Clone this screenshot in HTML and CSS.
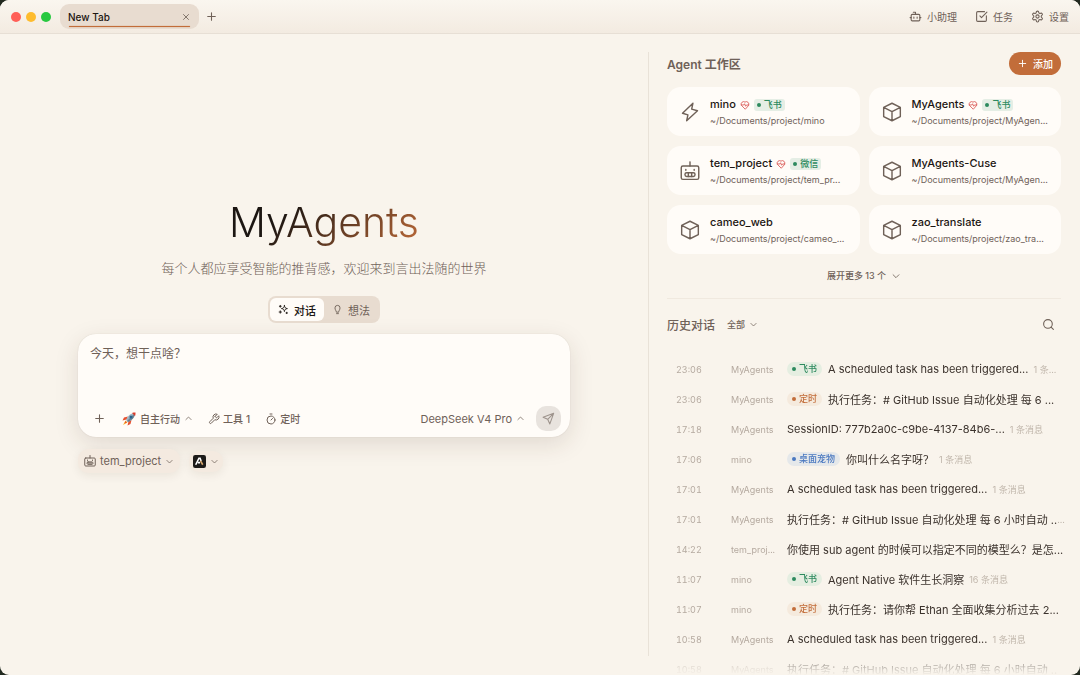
FILE: index.html
```html
<!DOCTYPE html>
<html lang="zh-CN">
<head>
<meta charset="utf-8">
<title>MyAgents</title>
<link rel="stylesheet" href="styles.css">
</head>
<body>
<svg class="sprite" aria-hidden="true">
  <symbol id="i-plus" viewBox="0 0 24 24"><path d="M5 12h14M12 5v14"/></symbol>
  <symbol id="i-x" viewBox="0 0 24 24"><path d="M18 6 6 18M6 6l12 12"/></symbol>
  <symbol id="i-down" viewBox="0 0 24 24"><path d="m5 9 7 7 7-7"/></symbol>
  <symbol id="i-up" viewBox="0 0 24 24"><path d="m19 15-7-7-7 7"/></symbol>
  <symbol id="i-bot" viewBox="0 0 24 24"><path d="M12 8V4H8"/><rect width="16" height="12" x="4" y="8" rx="2"/><path d="M2 14h2M20 14h2M15 13v2M9 13v2"/></symbol>
  <symbol id="i-check" viewBox="0 0 24 24"><path d="M21 10.5V19a2 2 0 0 1-2 2H5a2 2 0 0 1-2-2V5a2 2 0 0 1 2-2h12.5"/><path d="m9 11 3 3L22 4"/></symbol>
  <symbol id="i-gear" viewBox="0 0 24 24"><path d="M12.22 2h-.44a2 2 0 0 0-2 2v.18a2 2 0 0 1-1 1.73l-.43.25a2 2 0 0 1-2 0l-.15-.08a2 2 0 0 0-2.73.73l-.22.38a2 2 0 0 0 .73 2.73l.15.1a2 2 0 0 1 1 1.72v.51a2 2 0 0 1-1 1.74l-.15.09a2 2 0 0 0-.73 2.73l.22.38a2 2 0 0 0 2.73.73l.15-.08a2 2 0 0 1 2 0l.43.25a2 2 0 0 1 1 1.73V20a2 2 0 0 0 2 2h.44a2 2 0 0 0 2-2v-.18a2 2 0 0 1 1-1.73l.43-.25a2 2 0 0 1 2 0l.15.08a2 2 0 0 0 2.73-.73l.22-.39a2 2 0 0 0-.73-2.73l-.15-.08a2 2 0 0 1-1-1.74v-.5a2 2 0 0 1 1-1.74l.15-.09a2 2 0 0 0 .73-2.73l-.22-.38a2 2 0 0 0-2.73-.73l-.15.08a2 2 0 0 1-2 0l-.43-.25a2 2 0 0 1-1-1.73V4a2 2 0 0 0-2-2z"/><circle cx="12" cy="12" r="3"/></symbol>
  <symbol id="i-spark" viewBox="0 0 24 24"><path d="M14 3.5c.8 4.500 2 5.700 6.500 6.500-4.500.8-5.700 2-6.500 6.500-.8-4.500-2-5.700-6.500-6.500 4.500-.8 5.700-2 6.500-6.500zM5 15v5M2.500 17.500h5M5 3v4M3 5h4M19 18v3M17.500 19.500h3"/></symbol>
  <symbol id="i-bulb" viewBox="0 0 24 24"><path d="M9.500 17c0-2.500-3-4-3-8.500a5.500 5.500 0 0 1 11 0c0 4.500-3 6-3 8.500zM10 21h4"/></symbol>
  <symbol id="i-wrench" viewBox="0 0 24 24"><path d="M14.700 6.300a1 1 0 0 0 0 1.400l1.600 1.600a1 1 0 0 0 1.400 0l3.770-3.770a6 6 0 0 1-7.940 7.940l-6.910 6.910a2.120 2.120 0 0 1-3-3l6.910-6.910a6 6 0 0 1 7.940-7.940l-3.760 3.760z"/></symbol>
  <symbol id="i-timer" viewBox="0 0 24 24"><path d="M10 2h4M12 14l3-3"/><circle cx="12" cy="14" r="8"/></symbol>
  <symbol id="i-send" viewBox="0 0 24 24"><path d="M21.500 2.500 2 9.500l8.500 4 4 8.500zM21.500 2.500l-11 11"/></symbol>
  <symbol id="i-search" viewBox="0 0 24 24"><circle cx="11" cy="11" r="8"/><path d="m21 21-4.300-4.300"/></symbol>
  <symbol id="i-bolt" viewBox="0 0 24 24"><path d="M15.500 1.500 3 13.500l6.500 2-1.500 7L21 10.500l-7-2z"/></symbol>
  <symbol id="i-box" viewBox="0 0 24 24"><path d="M12 1.500 22 6.500v11L12 22.500 2 17.500v-11zM2 6.500l10 5 10-5M12 11.500v11"/></symbol>
  <symbol id="i-robot" viewBox="0 0 24 24"><path d="M12 1v5"/><rect x="1.500" y="6" width="21" height="16" rx="2"/><rect x="6" y="14" width="12" height="4.500" rx="2"/><path d="M10 14v4.500M14 14v4.500M7 10v1M17 10v1"/></symbol>
  <symbol id="i-heart" viewBox="0 0 24 24"><path d="M12 21.500 3.500 13A6 6 0 0 1 12 5a6 6 0 0 1 8.500 8zM3 12h6l2-3 2.500 6 2-3H21"/></symbol>
  <symbol id="i-rocket" viewBox="0 0 28 28">
    <path fill="#e8502f" d="M12 9 4 11l-3 6 8-2zM19 16l-2 8-6 3 2-8z"/>
    <path fill="#f7b52c" d="m7 17-5 9 9-5z"/>
    <path fill="#e8502f" d="m7 18-2 5 5-2z"/>
    <path fill="#9db4c3" d="M26 2c-8 0-14 5-18 14l4 4c9-4 14-10 14-18z"/>
    <path fill="#6b8292" d="M26 2 10 18l2 2c9-4 14-10 14-18z"/>
    <path fill="#d93c2b" d="M27 1c-3 0-5 0-7 1l6 6c1-2 1-4 1-7z"/>
    <circle cx="18" cy="10" r="3" fill="#25648f"/>
  </symbol>
</svg>

<div class="window">
  <header class="titlebar">
    <div class="lights"><span class="light red"></span><span class="light amber"></span><span class="light green"></span></div>
    <div class="tab"><span class="tab-name">New Tab</span><button class="icon-btn" aria-label="关闭"><svg class="icon s10"><use href="#i-x"/></svg></button></div>
    <button class="icon-btn new-tab" aria-label="新建标签"><svg class="icon s13"><use href="#i-plus"/></svg></button>
    <nav class="tools">
      <button class="tool"><svg class="icon s13"><use href="#i-bot"/></svg>小助理</button>
      <button class="tool"><svg class="icon s13"><use href="#i-check"/></svg>任务</button>
      <button class="tool"><svg class="icon s13"><use href="#i-gear"/></svg>设置</button>
    </nav>
  </header>

  <main class="panes">
    <section class="hero">
      <h1 class="brand">MyAgents</h1>
      <p class="tagline">每个人都应享受智能的推背感，欢迎来到言出法随的世界</p>
      <div class="switch">
        <button class="seg active"><svg class="icon s11"><use href="#i-spark"/></svg>对话</button>
        <button class="seg"><svg class="icon s11"><use href="#i-bulb"/></svg>想法</button>
      </div>
      <form class="composer">
        <textarea class="prompt" aria-label="消息" placeholder="今天，想干点啥？"></textarea>
        <div class="actions">
          <button type="button" class="act" aria-label="添加附件"><svg class="icon s13"><use href="#i-plus"/></svg></button>
          <button type="button" class="act mode"><svg class="rocket"><use href="#i-rocket"/></svg>自主行动<svg class="icon s9"><use href="#i-up"/></svg></button>
          <button type="button" class="act tools-act"><svg class="icon s12"><use href="#i-wrench"/></svg>工具 <span>1</span></button>
          <button type="button" class="act timer-act"><svg class="icon s12"><use href="#i-timer"/></svg>定时</button>
          <button type="button" class="act model">DeepSeek V4 Pro<svg class="icon s9"><use href="#i-up"/></svg></button>
          <button type="submit" class="send" aria-label="发送"><svg class="icon s13"><use href="#i-send"/></svg></button>
        </div>
      </form>
      <div class="chips">
        <button class="chip"><svg class="icon s12"><use href="#i-robot"/></svg>tem_project<svg class="icon s9"><use href="#i-down"/></svg></button>
        <button class="chip small" aria-label="运行时"><svg class="runtime" viewBox="0 0 24 24"><rect width="24" height="24" rx="4" fill="#1d1b19"/><path d="m5 18 6-12h2l2 5M9 14h4" stroke="#fff" stroke-width="3" fill="none"/><path d="m14 11 4 7" stroke="#d6a76d" stroke-width="3"/></svg><svg class="icon s9"><use href="#i-down"/></svg></button>
      </div>
    </section>

    <aside class="side">
      <div class="side-head"><h2 class="heading strong">Agent 工作区</h2><button class="add"><svg class="icon s11"><use href="#i-plus"/></svg>添加</button></div>
      <div class="cards">
        <a class="card" href="#"><svg class="icon s20"><use href="#i-bolt"/></svg><span class="info"><span class="name">mino<svg class="icon heart"><use href="#i-heart"/></svg><span class="tag">飞书</span></span><span class="path">~/Documents/project/mino</span></span></a>
        <a class="card" href="#"><svg class="icon s20"><use href="#i-box"/></svg><span class="info"><span class="name">MyAgents<svg class="icon heart"><use href="#i-heart"/></svg><span class="tag">飞书</span></span><span class="path">~/Documents/project/MyAgen...</span></span></a>
        <a class="card" href="#"><svg class="icon s20"><use href="#i-robot"/></svg><span class="info"><span class="name">tem_project<svg class="icon heart"><use href="#i-heart"/></svg><span class="tag">微信</span></span><span class="path">~/Documents/project/tem_pr...</span></span></a>
        <a class="card" href="#"><svg class="icon s20"><use href="#i-box"/></svg><span class="info"><span class="name">MyAgents-Cuse</span><span class="path">~/Documents/project/MyAgen...</span></span></a>
        <a class="card" href="#"><svg class="icon s20"><use href="#i-box"/></svg><span class="info"><span class="name">cameo_web</span><span class="path">~/Documents/project/cameo_...</span></span></a>
        <a class="card" href="#"><svg class="icon s20"><use href="#i-box"/></svg><span class="info"><span class="name">zao_translate</span><span class="path">~/Documents/project/zao_tra...</span></span></a>
      </div>
      <button class="more">展开更多 13 个<svg class="icon s10"><use href="#i-down"/></svg></button>
      <div class="history-head"><h2 class="heading">历史对话</h2><button class="filter">全部<svg class="icon s9"><use href="#i-down"/></svg></button><button class="icon-btn search" aria-label="搜索"><svg class="icon s13"><use href="#i-search"/></svg></button></div>
      <ul class="history">
        <li class="row"><time>23:06</time><span class="proj">MyAgents</span><span class="talk"><span class="pill green-pill">飞书</span>A scheduled task has been triggered...<small class="count">1 条...</small></span></li>
        <li class="row"><time>23:06</time><span class="proj">MyAgents</span><span class="talk"><span class="pill orange-pill">定时</span>执行任务：# GitHub Issue 自动化处理 每 6 ...</span></li>
        <li class="row"><time>17:18</time><span class="proj">MyAgents</span><span class="talk">SessionID: 777b2a0c-c9be-4137-84b6-...<small class="count">1 条消息</small></span></li>
        <li class="row"><time>17:06</time><span class="proj">mino</span><span class="talk"><span class="pill blue-pill">桌面宠物</span>你叫什么名字呀？<small class="count">1 条消息</small></span></li>
        <li class="row"><time>17:01</time><span class="proj">MyAgents</span><span class="talk">A scheduled task has been triggered...<small class="count">1 条消息</small></span></li>
        <li class="row"><time>17:01</time><span class="proj">MyAgents</span><span class="talk">执行任务：# GitHub Issue 自动化处理 每 6 小时自动 ..<small class="dots">...</small></span></li>
        <li class="row"><time>14:22</time><span class="proj">tem_proj...</span><span class="talk">你使用 sub agent 的时候可以指定不同的模型么？是怎...</span></li>
        <li class="row"><time>11:07</time><span class="proj">mino</span><span class="talk"><span class="pill green-pill">飞书</span>Agent Native 软件生长洞察<small class="count">16 条消息</small></span></li>
        <li class="row"><time>11:07</time><span class="proj">mino</span><span class="talk"><span class="pill orange-pill">定时</span>执行任务：请你帮 Ethan 全面收集分析过去 2...</span></li>
        <li class="row"><time>10:58</time><span class="proj">MyAgents</span><span class="talk">A scheduled task has been triggered...<small class="count">1 条消息</small></span></li>
        <li class="row"><time>10:58</time><span class="proj">MyAgents</span><span class="talk">执行任务：# GitHub Issue 自动化处理 每 6 小时自动 ..</span></li>
      </ul>
    </aside>
  </main>
</div>
</body>
</html>
```

FILE: styles.css
```css
* { box-sizing: border-box; }
body {
  margin: 0;
  background: #222a20;
  font-family: Inter, "Noto Sans CJK SC", sans-serif;
  font-size: 11px;
  color: #6f6158;
}
button {
  display: flex;
  align-items: center;
  padding: 0;
  border: 0;
  background: none;
  font: inherit;
  color: inherit;
  white-space: nowrap;
}
h1, h2, p, ul { margin: 0; padding: 0; }
.sprite { position: absolute; width: 0; height: 0; }
.icon {
  flex: none;
  fill: none;
  stroke: currentColor;
  stroke-width: 2;
  stroke-linecap: round;
  stroke-linejoin: round;
}
.s9 { width: 9px; height: 9px; }
.s10 { width: 10px; height: 10px; }
.s11 { width: 11px; height: 11px; }
.s12 { width: 12px; height: 12px; }
.s13 { width: 13px; height: 13px; }
.s20 { width: 20px; height: 20px; stroke-width: 1.7; }

.window {
  display: flex;
  flex-direction: column;
  height: 100vh;
  overflow: hidden;
  border-radius: 9px;
  background: #f9f4ec;
}
.titlebar {
  display: flex;
  flex: none;
  align-items: center;
  height: 34px;
  padding: 0 11px;
  border-bottom: 1px solid #e7dfd5;
  background: linear-gradient(#faf6ef, #f3ebe1);
}
.lights { display: flex; gap: 5px; }
.light { width: 10px; height: 10px; border-radius: 50%; }
.red { background: #ff5f57; }
.amber { background: #febc2e; }
.green { background: #28c840; }
.tab {
  position: relative;
  display: flex;
  align-items: center;
  justify-content: space-between;
  width: 139px;
  height: 25px;
  margin: 0 6px 0 9px;
  padding: 0 8px;
  border-radius: 9px;
  background: #e8dcd0;
}
.tab::after {
  content: "";
  position: absolute;
  left: 9px;
  right: 9px;
  bottom: 2px;
  height: 1px;
  border-radius: 1px;
  background: #c26d3a;
  box-shadow: 0 0 1px #c26d3a;
}
.tab-name { font-size: 10px; font-weight: 500; color: #1c1612; }
.tools { display: flex; gap: 18px; margin-left: auto; }
.tool { gap: 5px; font-size: 10px; }

.panes {
  display: grid;
  grid-template-columns: 3fr 2fr;
  flex: 1;
  min-height: 0;
}
.hero {
  display: flex;
  flex-direction: column;
  align-items: center;
  justify-content: center;
  padding: 0 78px 43px;
}
.brand {
  background: linear-gradient(135deg, #1c1612 30%, #c26d3a 100%);
  background-clip: text;
  -webkit-background-clip: text;
  color: transparent;
  font-size: 41px;
  font-weight: 300;
  line-height: 58px;
}
.tagline { margin-top: 8px; font-size: 13px; font-weight: 300; line-height: 18px; }
.switch {
  display: flex;
  margin-top: 19px;
  padding: 2px;
  border-radius: 8px;
  background: #e8dcd0;
}
.seg { gap: 5px; width: 54px; height: 23px; justify-content: center; border-radius: 6px; }
.seg.active { background: #fffcf8; color: #1c1612; font-weight: 500; }
.composer {
  width: 100%;
  margin-top: 11px;
  padding: 11px 9px 6px 12px;
  border-radius: 18px;
  background: #fffcf8;
  box-shadow: 0 0 1px rgba(60, 40, 20, .2), 0 7px 24px rgba(60, 40, 20, .13);
}
.prompt {
  display: block;
  width: 100%;
  height: 61px;
  padding: 0;
  border: 0;
  outline: 0;
  resize: none;
  background: none;
  font: inherit;
  font-size: 12px;
  line-height: 17px;
}
.prompt::placeholder { color: #6f6158; }
.actions { display: flex; align-items: center; padding-left: 3px; }
.act { gap: 4px; font-size: 10px; font-weight: 500; }
.mode { margin-left: 16px; }
.rocket { width: 14px; height: 14px; }
.tools-act { margin-left: 15px; gap: 3px; }
.timer-act { margin-left: 15px; gap: 3px; }
.model { margin-left: auto; font-size: 11px; font-weight: 400; }
.send {
  width: 25px;
  height: 25px;
  margin-left: 11px;
  justify-content: center;
  border-radius: 10px;
  background: #e8e3de;
  color: #9d938c;
}
.chips { display: flex; align-items: center; align-self: flex-start; gap: 9px; margin-top: 12px; }
.chip {
  height: 24px;
  gap: 4px;
  padding: 0 6px;
  border-radius: 10px;
  background: #f4eae0;
  box-shadow: 0 3px 10px rgba(60, 40, 20, .07);
}
.chip.small { height: 21px; padding: 0 4px; }
.runtime { width: 13px; height: 13px; }

.side {
  position: relative;
  display: flex;
  flex-direction: column;
  min-width: 0;
  min-height: 0;
  padding: 18px 19px 0;
}
.side::before {
  content: "";
  position: absolute;
  left: 0;
  top: 18px;
  bottom: 19px;
  width: 1px;
  background: #e9e2d8;
}
.side-head { display: flex; align-items: center; justify-content: space-between; }
.heading { font-size: 12px; font-weight: 500; color: #6f6158; }
.heading.strong { font-weight: 600; }
.add {
  gap: 5px;
  height: 23px;
  padding: 0 8px;
  border-radius: 12px;
  background: #c26d3a;
  color: #fff;
  font-size: 10px;
  font-weight: 500;
}
.cards {
  display: grid;
  grid-template-columns: repeat(2, minmax(0, 1fr));
  gap: 10px 9px;
  margin-top: 12px;
}
.card {
  display: flex;
  align-items: center;
  gap: 10px;
  height: 49px;
  padding: 0 13px;
  border-radius: 14px;
  background: #fffcf8;
  color: #6f6158;
  text-decoration: none;
}
.info { display: grid; flex: 1; min-width: 0; padding-top: 1px; }
.name { display: flex; align-items: center; gap: 4px; font-weight: 500; line-height: 17px; color: #1c1612; }
.heart { width: 10px; height: 10px; color: #d9534f; }
.path { white-space: nowrap; font-size: 9px; line-height: 15px; }
.tag, .pill {
  display: inline-flex;
  align-items: center;
  gap: 3px;
  font-size: 9px;
  font-weight: 500;
  line-height: 12px;
}
.tag { padding: 0 3px; border-radius: 3px; background: #e5eee5; color: #2d8a5e; }
.tag::before, .pill::before {
  content: "";
  width: 4px;
  height: 4px;
  border-radius: 50%;
  background: currentColor;
}
.more { align-self: center; gap: 5px; margin-top: 13px; font-size: 9px; font-weight: 500; line-height: 18px; }
.history-head {
  display: flex;
  align-items: center;
  gap: 12px;
  height: 52px;
  margin-top: 13px;
  border-top: 1px solid #f0e9df;
}
.filter { gap: 4px; font-size: 9px; font-weight: 500; }
.search { margin: 0 6px 0 auto; }
.history {
  flex: 1;
  min-height: 0;
  margin: 4px -15px 0 0;
  overflow: hidden;
  list-style: none;
  mask-image: linear-gradient(#000 calc(100% - 28px), transparent);
}
.row {
  display: grid;
  grid-template-columns: 46px 47px minmax(0, 1fr);
  gap: 9px;
  align-items: center;
  height: 30px;
  padding-left: 9px;
  font-size: 9px;
  font-variant-numeric: tabular-nums;
  color: #b5aaa0;
}
.proj { white-space: nowrap; }
.talk {
  display: flex;
  align-items: center;
  white-space: nowrap;
  font-size: 11px;
  font-variant-numeric: normal;
  color: #3b322c;
}
.count { margin-left: 5px; font-size: 9px; color: #c0b6ab; }
.dots { font-size: 9px; color: #c0b6ab; }
.pill { margin-right: 6px; padding: 1px 5px; border-radius: 8px; }
.green-pill { background: #e5eee1; color: #2d8a5e; }
.orange-pill { background: #f5eadd; color: #c26d3a; }
.blue-pill { background: #e5e8ea; color: #4a78c0; }
```
